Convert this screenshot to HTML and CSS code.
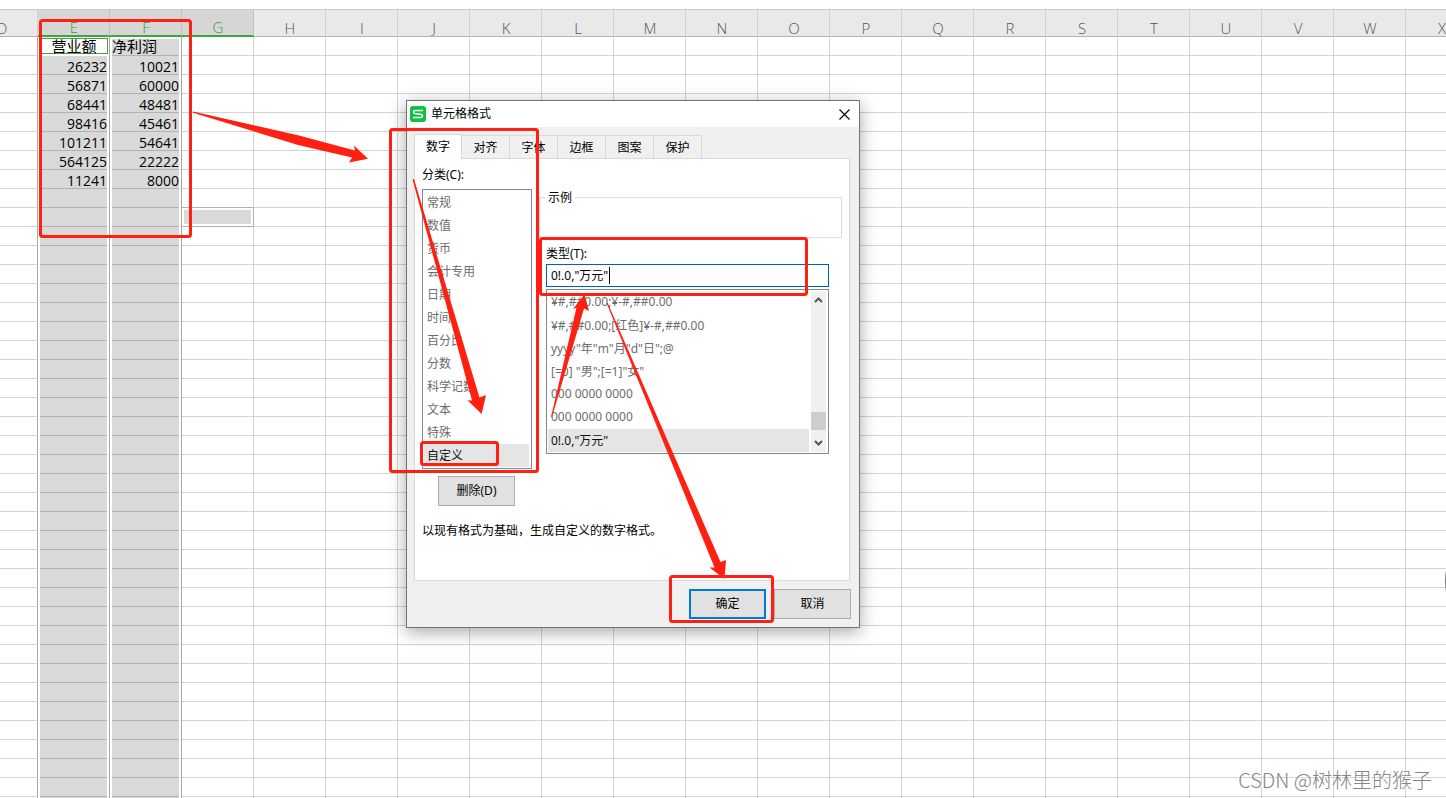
FILE: index.html
```html
<!DOCTYPE html>
<html lang="zh-CN">
<head>
<meta charset="utf-8">
<title>单元格格式</title>
<link rel="stylesheet" href="styles.css">
</head>
<body>
<main class="workbook">
  <table class="sheet" aria-label="工作表">
    <thead><tr id="letters"></tr></thead>
    <tbody id="rows"></tbody>
  </table>
</main>

<section class="dialog" role="dialog" aria-labelledby="dialog-title">
  <header class="titlebar">
    <svg class="logo" viewBox="0 0 16 16" aria-hidden="true">
      <rect width="16" height="16" rx="3" fill="#12bf45"/>
      <path d="M13 4.5H5.2Q3.5 4.5 3.5 6.1Q3.5 7.5 5.2 7.8L11 8.2Q12.5 8.5 12.5 9.8Q12.5 11.5 10.8 11.5H3" fill="none" stroke="#fff" stroke-width="1.4"/>
    </svg>
    <h1 class="title" id="dialog-title">单元格格式</h1>
    <button class="close" type="button" aria-label="关闭">
      <svg viewBox="0 0 11 11" width="11" height="11"><path d="M.5 .5L10.500 10.500M10.500 .5L.5 10.500" stroke="#000" stroke-width="1.1"/></svg>
    </button>
  </header>
  <div class="content">
    <div class="tabs" role="tablist">
      <button class="tab active" role="tab" aria-selected="true">数字</button>
      <button class="tab" role="tab">对齐</button>
      <button class="tab" role="tab">字体</button>
      <button class="tab" role="tab">边框</button>
      <button class="tab" role="tab">图案</button>
      <button class="tab" role="tab">保护</button>
    </div>
    <div class="panel" role="tabpanel">
      <div class="columns">
        <div class="categories">
          <label class="label" for="category">分类(C):</label>
          <select class="list category-list" id="category" size="12">
            <option>常规</option>
            <option>数值</option>
            <option>货币</option>
            <option>会计专用</option>
            <option>日期</option>
            <option>时间</option>
            <option>百分比</option>
            <option>分数</option>
            <option>科学记数</option>
            <option>文本</option>
            <option>特殊</option>
            <option selected>自定义</option>
          </select>
          <button class="button delete" type="button">删除(D)</button>
        </div>
        <div class="formats">
          <fieldset class="sample"><legend>示例</legend></fieldset>
          <label class="label" for="type">类型(T):</label>
          <div class="field">
            <input class="type-input" id="type" type="text" value='0!.0,"万元"'>
            <span class="caret"></span>
          </div>
          <div class="format-box">
            <select class="list format-list" size="7" aria-label="数字格式">
              <option>¥#,##0.00;¥-#,##0.00</option>
              <option>¥#,##0.00;[红色]¥-#,##0.00</option>
              <option>yyyy"年"m"月"d"日";@</option>
              <option>[=0] "男";[=1]"女"</option>
              <option>000 0000 0000</option>
              <option>000 0000 0000</option>
              <option selected>0!.0,"万元"</option>
            </select>
            <div class="scrollbar">
              <button class="arrow" type="button" aria-label="向上滚动"><svg viewBox="0 0 9 6" width="9" height="6"><path d="M1 5L4.500 1.500L8 5" fill="none" stroke="#555" stroke-width="2"/></svg></button>
              <div class="track"><div class="thumb"></div></div>
              <button class="arrow" type="button" aria-label="向下滚动"><svg viewBox="0 0 9 6" width="9" height="6"><path d="M1 1L4.500 4.500L8 1" fill="none" stroke="#555" stroke-width="2"/></svg></button>
            </div>
          </div>
        </div>
      </div>
      <p class="hint">以现有格式为基础，生成自定义的数字格式。</p>
    </div>
    <footer class="actions">
      <button class="button primary" type="button">确定</button>
      <button class="button" type="button">取消</button>
    </footer>
  </div>
</section>

<svg class="annotations" aria-hidden="true">
  <g fill="none" stroke="#ff2012" stroke-width="3">
    <rect x="40.500" y="20.500" width="150" height="216" rx="2"/>
    <rect x="390.500" y="129.500" width="147" height="342" rx="2"/>
    <rect x="540.500" y="238.500" width="266" height="56" rx="2"/>
    <rect x="421.500" y="442.500" width="76" height="22" rx="2"/>
    <rect x="670.500" y="576.500" width="102" height="45" rx="2"/>
  </g>
  <g fill="#ff2012">
    <path d="M193 111.500L299 135.500L355 150.500L354 145.500L368 158.700L349 162.500L352 157.500L298 145L193 112.700Z"/>
    <path d="M413 179L414 179L479.500 397.500L486 395L481.700 414L467.500 400.300L472 400.500L412.700 180Z"/>
    <path d="M551 417L576.500 307.500L572.500 309.500L584.500 294.500L589 311L584 308.500L552 417Z"/>
    <path d="M606.500 303L607.700 303L720.500 562L726 560L724.500 579L709.500 567.500L714.500 567.500Z"/>
  </g>
  <path d="M1446 570Q1444 580 1446 592Z" fill="#777"/>
</svg>
<div class="watermark">CSDN @树林里的猴子</div>
<script src="sheet.js"></script>
</body>
</html>
```
FILE: styles.css
```css
* {
  box-sizing: border-box;
}

body {
  margin: 0;
  min-height: 100vh;
  position: relative;
  overflow: hidden;
  background: #fff;
  font: 12px/18px "Noto Sans", "Noto Sans CJK SC", sans-serif;
  color: #000;
}

button,
input,
select {
  margin: 0;
  font: inherit;
  color: inherit;
  border-radius: 0;
  outline: none;
}

.workbook {
  height: 100vh;
  padding-top: 9px;
  overflow: hidden;
}

/* The first visible column is scrolled partly out of view. */
.sheet {
  width: 1512px;
  margin-left: -34px;
  table-layout: fixed;
  border-collapse: separate;
  border-spacing: 0;
  font: 14px/18px "Open Sans", "Noto Sans CJK SC", sans-serif;
}

.sheet th {
  height: 28px;
  padding: 9px 0 0 1px;
  font-size: 15px;
  font-weight: 300;
  color: #555;
  background: #e9e9e9;
  border-top: 1px solid #ccc;
  border-right: 1px solid #d2d2d2;
  border-bottom: 1px solid #b4b4b4;
  line-height: 16px;
}

.sheet .picked {
  padding-top: 10px;
  color: #2f9e3a;
  background: #d6d6d6;
  border-right-color: #c2c2c2;
  border-bottom: 2px solid #3fa53f;
  line-height: 15px;
}

.sheet td {
  height: 19px;
  padding: 0;
  border-right: 1px solid #d3d3d3;
  border-bottom: 1px solid #d3d3d3;
}

.sheet .before,
.sheet .selected {
  border-right-color: #a6a6a6;
}

.sheet .selected {
  padding: 0 2px;
  border-bottom: 0;
}

.value {
  display: block;
  height: 19px;
  line-height: 22px;
  text-align: right;
  background: #d9d9d9;
  border-bottom: 1px solid #b2b2b2;
  white-space: nowrap;
}

.value.text {
  height: 17px;
  margin-top: 2px;
  line-height: 14px;
  text-align: left;
  font-size: 15px;
}

.value.current {
  height: 16px;
  margin: 1px -1px 2px 0;
  line-height: 14px;
  text-align: center;
  background: #fff;
  border: 1px solid #3fa53f;
}

.sheet .cursor {
  padding: 2px;
  border-color: #b0b0b0;
}

.sheet .over-cursor {
  border-bottom-color: #b0b0b0;
}

.cursor-fill {
  display: block;
  height: 14px;
  background: #d9d9d9;
}

.dialog {
  position: absolute;
  left: 406px;
  top: 100px;
  width: 454px;
  background: #f0f0f0;
  border: 1px solid #6f7373;
  box-shadow: 0 4px 16px rgba(0, 0, 0, 0.35);
}

.titlebar {
  display: flex;
  align-items: center;
  height: 26px;
  padding: 0 9px 0 3px;
  gap: 5px;
  background: #fff;
}

.logo {
  width: 16px;
  height: 16px;
}

.title {
  flex: 1;
  margin: 0;
  font-size: 12px;
  font-weight: 400;
}

.close {
  display: flex;
  padding: 0;
  background: none;
  border: 0;
}

.content {
  padding: 7px 8px 8px 7px;
}

.tabs {
  display: flex;
  align-items: flex-end;
}

.tab {
  width: 48px;
  height: 23px;
  padding: 2px 0 0;
  background: #f0f0f0;
  border: 1px solid #d9d9d9;
  border-width: 1px 1px 0 0;
}

.tab.active {
  width: 48px;
  height: 25px;
  margin-bottom: -1px;
  padding: 0;
  background: #fff;
  border-left-width: 1px;
  position: relative;
}

.panel {
  height: 423px;
  margin-right: 1px;
  padding: 7px 7px 0;
  background: #fff;
  border: 1px solid #d9d9d9;
}

.columns {
  display: flex;
  gap: 7px;
}

.categories {
  width: 110px;
}

.label {
  display: block;
  line-height: 18px;
}

.list {
  display: block;
  color: #6d6d6d;
  background: #fff;
  overflow: hidden;
}

.list option {
  height: 23px;
  padding: 2px 3px 0;
}

.list option:checked {
  background: linear-gradient(#e5e5e5, #e5e5e5);
}

.category-list {
  width: 110px;
  height: 280px;
  margin-top: 5px;
  padding: 1px 2px 1px 1px;
  border: 1px solid #828790;
}

.button {
  width: 77px;
  height: 30px;
  padding: 0;
  background: #e1e1e1;
  border: 1px solid #adadad;
}

.delete {
  display: block;
  margin: 7px 0 0 16px;
}

.formats {
  flex: 1;
  padding-top: 22px;
}

.sample {
  height: 50px;
  margin: 0 0 7px;
  padding: 0;
  border: 1px solid #dcdcdc;
}

.sample legend {
  margin-left: 5px;
  padding: 1px 3px 0;
  line-height: 17px;
}

.formats .label,
.field,
.format-box {
  margin-left: 7px;
}

.field {
  display: grid;
  align-items: center;
  width: 283px;
  margin-top: 1px;
}

.type-input {
  grid-area: 1 / 1;
  width: 100%;
  height: 23px;
  padding: 0 4px 1px;
  background: #fff;
  border: 1px solid #0063b1;
}

.caret {
  grid-area: 1 / 1;
  width: 1px;
  height: 17px;
  margin-left: 63px;
  background: #000;
}

.format-box {
  display: flex;
  width: 283px;
  height: 165px;
  margin-top: 2px;
  padding: 1px;
  border: 1px solid #828790;
}

.format-list {
  flex: 1;
  height: 161px;
  padding: 0;
  border: 0;
}

.scrollbar {
  display: flex;
  flex-direction: column;
  width: 15px;
  margin: 0 1px 0 2px;
  background: #f0f0f0;
}

.arrow {
  display: flex;
  align-items: center;
  justify-content: center;
  height: 18px;
  padding: 0;
  background: none;
  border: 0;
}

.track {
  display: flex;
  flex: 1;
  flex-direction: column;
  justify-content: flex-end;
  padding-bottom: 4px;
}

.thumb {
  height: 18px;
  background: #cdcdcd;
}

.hint {
  margin: 16px 0 0;
}

.actions {
  display: flex;
  justify-content: flex-end;
  gap: 8px;
  padding-top: 8px;
}

.primary {
  border: 2px solid #0078d7;
}

.annotations {
  position: absolute;
  inset: 0;
  width: 100%;
  height: 100%;
  pointer-events: none;
}

.watermark {
  position: absolute;
  right: 14px;
  bottom: 6px;
  font: 300 20px/24px "Noto Sans CJK SC", sans-serif;
  color: #858585;
  text-shadow: 1px 1px 0 #fff;
}
```
FILE: sheet.js
```js
const letters = [..."DEFGHIJKLMNOPQRSTUVWX"];
const data = [
  ["营业额", "净利润"],
  [26232, 10021],
  [56871, 60000],
  [68441, 48481],
  [98416, 45461],
  [101211, 54641],
  [564125, 22222],
  [11241, 8000]
];

document.getElementById("letters").innerHTML = letters
  .map(l => `<th scope="col"${"EFG".includes(l) ? ' class="picked"' : ""}>${l}</th>`)
  .join("");

function cell(letter, row) {
  if (letter === "D") return '<td class="before"></td>';
  if (letter === "E" || letter === "F") {
    const value = data[row] ? data[row]["EF".indexOf(letter)] : "";
    let kind = "value";
    if (row === 0) kind += letter === "E" ? " text current" : " text";
    return `<td class="selected"><span class="${kind}">${value}</span></td>`;
  }
  if (letter === "G" && row === 8) return '<td class="over-cursor"></td>';
  if (letter === "G" && row === 9) return '<td class="cursor"><span class="cursor-fill"></span></td>';
  return "<td></td>";
}

let html = "";
for (let row = 0; row < 41; row++) {
  html += "<tr>" + letters.map(l => cell(l, row)).join("") + "</tr>";
}
document.getElementById("rows").innerHTML = html;
```
